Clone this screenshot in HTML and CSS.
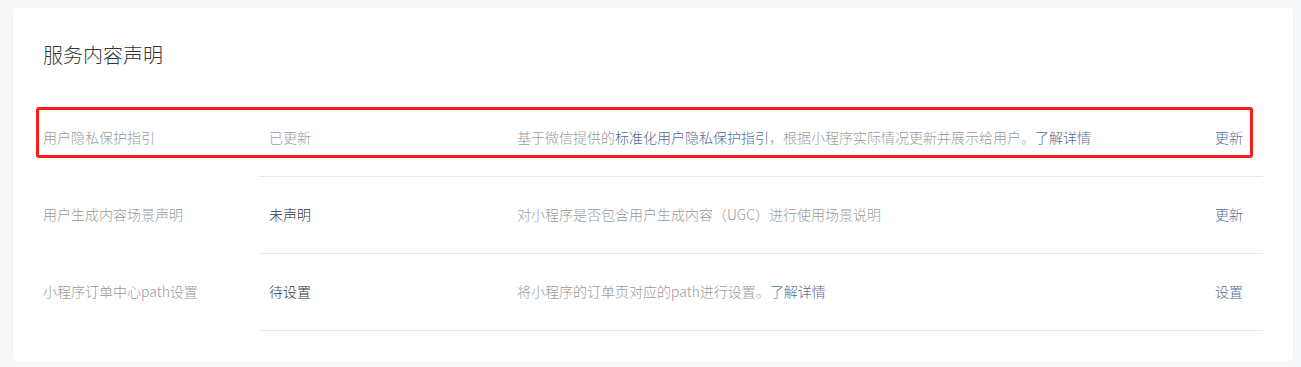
FILE: index.html
```html
<!DOCTYPE html>
<html lang="zh-CN">
<head>
<meta charset="utf-8">
<title>服务内容声明</title>
<link rel="stylesheet" href="styles.css">
</head>
<body>
<div class="card">
  <h2 class="title">服务内容声明</h2>
  <div class="list">
    <div class="row">
      <div class="label">用户隐私保护指引</div>
      <div class="cell">
        <div class="status muted">已更新</div>
        <div class="desc">基于微信提供的<a class="link">标准化用户隐私保护指引</a>，根据小程序实际情况更新并展示给用户。<a class="link">了解详情</a></div>
        <a class="action">更新</a>
      </div>
      <div class="highlight"></div>
    </div>
    <div class="row">
      <div class="label">用户生成内容场景声明</div>
      <div class="cell">
        <div class="status">未声明</div>
        <div class="desc">对小程序是否包含用户生成内容（UGC）进行使用场景说明</div>
        <a class="action">更新</a>
      </div>
    </div>
    <div class="row">
      <div class="label">小程序订单中心path设置</div>
      <div class="cell">
        <div class="status">待设置</div>
        <div class="desc">将小程序的订单页对应的path进行设置。<a class="link">了解详情</a></div>
        <a class="action">设置</a>
      </div>
    </div>
  </div>
</div>
</body>
</html>
```
FILE: styles.css
```css
html, body {
  margin: 0;
  padding: 0;
  background: #f6f7f9;
  font-family: "Microsoft YaHei", "Noto Sans CJK SC", "Noto Sans", sans-serif;
  font-weight: 300;
}
.card {
  margin: 8px 8px 0 13px;
  width: 1280px;
  box-sizing: border-box;
  padding: 30px;
  background: #fff;
  border-radius: 4px;
  box-shadow: 0 1px 2px rgba(0,0,0,0.08);
}
.title {
  margin: 0 0 28px 0;
  font-size: 20px;
  font-weight: 300;
  line-height: 34px;
  color: #353535;
}
.list {
  display: flex;
  flex-direction: column;
}
.row {
  position: relative;
  display: flex;
  height: 77px;
  font-size: 14px;
  line-height: 20px;
}
.label {
  width: 216px;
  flex: none;
  display: flex;
  align-items: center;
  color: #9a9a9a;
  padding-bottom: 3px;
}
.cell {
  flex: 1;
  display: flex;
  align-items: center;
  padding: 0 20px 2px 10px;
  border-bottom: 1px solid #e7e7eb;
}
.status {
  width: 248px;
  flex: none;
  color: #353535;
}
.status.muted {
  color: #9a9a9a;
}
.desc {
  flex: 1;
  color: #9a9a9a;
}
.link {
  color: #576b95;
  text-decoration: none;
}
.action {
  color: #576b95;
  text-decoration: none;
}
.highlight {
  position: absolute;
  left: -7px;
  top: 7px;
  width: 1217px;
  height: 51px;
  box-sizing: border-box;
  border: 3px solid #ff1a1a;
  border-radius: 3px;
  pointer-events: none;
}
```
